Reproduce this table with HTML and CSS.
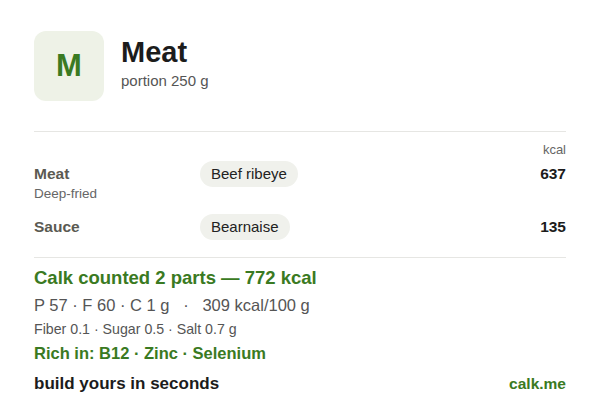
FILE: index.html
```html
<!DOCTYPE html>
<html lang="en">
<head>
    <meta charset="UTF-8">
    <meta name="viewport" content="width=device-width, initial-scale=1.0">
    <title>Meat - Calk</title>
    <link rel="stylesheet" href="styles.css">
</head>
<body>

<div class="card">
    <header class="head">
        <div class="badge">M</div>
        <div class="head-text">
            <h1>Meat</h1>
            <p class="portion">portion 250 g</p>
        </div>
    </header>

    <section class="parts">
        <div class="unit">kcal</div>
        <div class="row">
            <div class="name">
                <div class="label">Meat</div>
                <div class="note">Deep-fried</div>
            </div>
            <div><span class="pill">Beef ribeye</span></div>
            <div class="kcal">637</div>
        </div>
        <div class="row">
            <div class="name">
                <div class="label">Sauce</div>
            </div>
            <div><span class="pill">Bearnaise</span></div>
            <div class="kcal">135</div>
        </div>
    </section>

    <section class="summary">
        <p class="total">Calk counted 2 parts — 772 kcal</p>
        <p class="macros">P 57 · F 60 · C 1 g &nbsp; · &nbsp; 309 kcal/100 g</p>
        <p class="extra">Fiber 0.1 · Sugar 0.5 · Salt 0.7 g</p>
        <p class="rich">Rich in: B12 · Zinc · Selenium</p>
        <div class="foot">
            <span class="cta">build yours in seconds</span>
            <span class="site">calk.me</span>
        </div>
    </section>
</div>

</body>
</html>
```

FILE: styles.css
```css
body {
    margin: 0;
    padding: 0;
    background-color: #fff;
    font-family: "Liberation Sans", Arial, sans-serif;
    color: #222;
}
p {
    margin: 0;
}
.card {
    padding: 31px 34px 0 34px;
}
.head {
    display: flex;
    align-items: flex-start;
    gap: 17px;
    padding-bottom: 30px;
    border-bottom: 1px solid #e6e6e3;
}
.badge {
    width: 70px;
    height: 70px;
    border-radius: 12px;
    background-color: #eef2e7; /* pale sage */
    color: #3a7a22;
    font-size: 31px;
    font-weight: bold;
    display: flex;
    align-items: center;
    justify-content: center;
}
.head-text h1 {
    margin: 4px 0 0 0;
    font-size: 29px;
    line-height: 34px;
    color: #1c1c1c;
}
.portion {
    margin-top: 3px;
    font-size: 15px;
    line-height: 18px;
    color: #555;
}
.parts {
    padding: 11px 0 17px 0;
    border-bottom: 1px solid #e6e6e3;
}
.unit {
    text-align: right;
    font-size: 13px;
    line-height: 14px;
    color: #666;
    margin-bottom: 4px;
}
.row {
    display: grid;
    grid-template-columns: 166px 1fr auto;
    align-items: start;
    margin-bottom: 12px;
}
.row:last-child {
    margin-bottom: 0;
}
.label {
    margin-top: 4px;
    font-size: 15.5px;
    line-height: 18px;
    font-weight: bold;
    color: #5a5a52;
}
.note {
    margin-top: 3px;
    font-size: 13.5px;
    line-height: 16px;
    color: #666;
}
.pill {
    display: inline-block;
    padding: 4px 11px;
    font-size: 15px;
    line-height: 18px;
    background-color: #f0f1ec;
    border-radius: 13px;
    color: #222;
}
.kcal {
    margin-top: 4px;
    font-size: 15.5px;
    line-height: 18px;
    font-weight: bold;
    color: #1c1c1c;
}
.summary {
    padding-top: 9px;
}
.total {
    font-size: 18.5px;
    line-height: 22px;
    font-weight: bold;
    color: #3a7a22;
}
.macros {
    margin-top: 6px;
    font-size: 16.5px;
    line-height: 20px;
    color: #555;
}
.extra {
    margin-top: 6px;
    font-size: 14.2px;
    line-height: 17px;
    color: #555;
}
.rich {
    margin-top: 5px;
    font-size: 16.5px;
    line-height: 20px;
    font-weight: bold;
    color: #3a7a22;
}
.foot {
    display: flex;
    justify-content: space-between;
    align-items: baseline;
    margin-top: 11px;
}
.cta {
    font-size: 17px;
    font-weight: bold;
    color: #1c1c1c;
}
.site {
    font-size: 15.5px;
    font-weight: bold;
    color: #3a7a22;
}
```
